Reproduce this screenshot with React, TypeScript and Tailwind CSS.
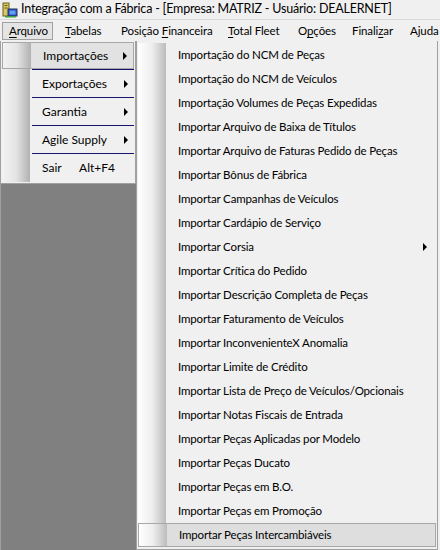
import React from "react";

const font = { fontFamily: 'Lato, "Noto Sans", sans-serif' };

// item slots measured from the screenshot, so the text lands where it does there
const topMenu: { label: string; u: number; cls: string }[] = [
  { label: "Arquivo", u: 0, cls: "w-[51px] mr-[5px] pl-[6px] bg-[#e4e4e4] border border-[#a0a0a0]" },
  { label: "Tabelas", u: 0, cls: "w-[56px] pl-[7px]" },
  { label: "Posição Financeira", u: 8, cls: "w-[107px] pl-[7px]" },
  { label: "Total Fleet", u: 0, cls: "w-[70px] pl-[7px]" },
  { label: "Opções", u: 1, cls: "w-[54px] pl-[7px]" },
  { label: "Finalizar", u: 6, cls: "w-[58px] pl-[7px]" },
  { label: "Ajuda", u: -1, cls: "w-[40px] pl-[7px]" },
];

const fileMenu: { label: string; arrow?: boolean; shortcut?: string }[] = [
  { label: "Importações", arrow: true },
  { label: "Exportações", arrow: true },
  { label: "Garantia", arrow: true },
  { label: "Agile Supply", arrow: true },
  { label: "Sair", shortcut: "Alt+F4" },
];

const imports = [
  "Importação do NCM de Peças",
  "Importação do NCM de Veículos",
  "Importação Volumes de Peças Expedidas",
  "Importar Arquivo de Baixa de Títulos",
  "Importar Arquivo de Faturas Pedido de Peças",
  "Importar Bônus de Fábrica",
  "Importar Campanhas de Veículos",
  "Importar Cardápio de Serviço",
  "Importar Corsia",
  "Importar Crítica do Pedido",
  "Importar Descrição Completa de Peças",
  "Importar Faturamento de Veículos",
  "Importar InconvenienteX Anomalia",
  "Importar Limite de Crédito",
  "Importar Lista de Preço de Veículos/Opcionais",
  "Importar Notas Fiscais de Entrada",
  "Importar Peças Aplicadas por Modelo",
  "Importar Peças Ducato",
  "Importar Peças em B.O.",
  "Importar Peças em Promoção",
  "Importar Peças Intercambiáveis",
];

function Underlined({ text, u }: { text: string; u: number }) {
  if (u < 0) return <span>{text}</span>;
  return (
    <span className="whitespace-pre">
      {text.slice(0, u)}
      <span className="underline underline-offset-2">{text[u]}</span>
      {text.slice(u + 1)}
    </span>
  );
}

function Arrow() {
  return (
    <svg width="5" height="8" viewBox="0 0 5 8" className="shrink-0">
      <path d="M0 0 L4 4 L0 8 Z" fill="#000" />
    </svg>
  );
}

function AppIcon() {
  return (
    <svg width="16" height="16" viewBox="0 0 16 16" className="shrink-0">
      <rect x="1" y="1" width="6" height="13" fill="#d8c860" stroke="#6a6020" strokeWidth="1" />
      <rect x="2.5" y="3" width="3" height="1" fill="#6a6020" />
      <rect x="2.5" y="5.5" width="3" height="1" fill="#6a6020" />
      <rect x="6" y="7" width="9" height="7" fill="#2050c0" stroke="#303060" strokeWidth="1" />
      <rect x="7.5" y="8.5" width="6" height="4" fill="#60a0f0" />
      <rect x="3" y="14" width="11" height="1.5" fill="#40a040" />
    </svg>
  );
}

export default function App() {
  return (
    <div
      className="w-[440px] h-[550px] overflow-hidden bg-[#f0f0f0] text-[12px] text-black flex flex-col whitespace-nowrap"
      style={font}
    >
      {/* title bar */}
      <div className="h-[20px] flex items-center gap-[3px] pl-[2px] border-b border-[#d8d8d8] text-[12.5px] tracking-[-0.2px]">
        <AppIcon />
        <span className="leading-none">Integração com a Fábrica - [Empresa: MATRIZ - Usuário: DEALERNET]</span>
      </div>

      {/* menu bar */}
      <div className="h-[21px] flex items-center pl-[2px] text-[11.5px] tracking-[-0.1px]">
        {topMenu.map((m) => (
          <div key={m.label} className={"h-[18px] shrink-0 flex items-center " + m.cls}>
            <Underlined text={m.label} u={m.u} />
          </div>
        ))}
      </div>

      <div className="flex-1 flex">
        {/* left column: file menu over gray workspace */}
        <div className="w-[136px] flex flex-col">
          <div className="bg-[#f0f0f0] border border-[#a0a0a0] border-t-0 px-[1px] pt-[1px] pb-[1px] flex flex-col">
            {fileMenu.map((m, i) => (
              <div key={m.label} className="h-[28px] flex flex-col">
                <div
                  className={
                    i === 0
                      ? "h-[27px] flex items-center border border-[#a8a8a8] bg-[#e2e2e2]"
                      : "h-[27px] flex items-center"
                  }
                >
                  <div className="w-[28px] self-stretch bg-gradient-to-r from-[#f2f2f2] via-[#e4e4e4] to-[#b2b2b2]" />
                  <div className="flex-1 flex items-center pl-[12px] pr-[5px]">
                    <span className="flex-1">{m.label}</span>
                    {m.arrow && <Arrow />}
                    {m.shortcut && <span className="mr-[14px]">{m.shortcut}</span>}
                  </div>
                </div>
                <div className="h-[1px] flex">
                  <div className="w-[28px] bg-gradient-to-r from-[#f2f2f2] via-[#e4e4e4] to-[#b2b2b2]" />
                  <div className={i < fileMenu.length - 1 ? "flex-1 ml-[2px] bg-[#14146e]" : "flex-1"} />
                </div>
              </div>
            ))}
          </div>
          <div className="flex-1 bg-[#808080] border-l border-[#a0a0a0]" />
        </div>

        {/* submenu */}
        <div className="w-[302px] border border-[#a0a0a0] border-t-0 bg-[#f0f0f0] px-[1px] pt-[2px] flex flex-col text-[11.5px] tracking-[-0.15px]">
          {imports.map((label, i) => (
            <div
              key={label}
              className={
                i === imports.length - 1
                  ? "h-[24px] shrink-0 flex items-center border border-[#a8a8a8] bg-[#dedede]"
                  : "h-[24px] shrink-0 flex items-center"
              }
            >
              <div className="w-[28px] self-stretch bg-gradient-to-r from-[#ffffff] via-[#eeeeee] to-[#bcbcbc]" />
              <span className="flex-1 pl-[12px]">{label}</span>
              {label === "Importar Corsia" && (
                <span className="pr-[8px]">
                  <Arrow />
                </span>
              )}
            </div>
          ))}
        </div>
        <div className="flex-1 bg-[#f0f0f0]" />
      </div>
    </div>
  );
}
